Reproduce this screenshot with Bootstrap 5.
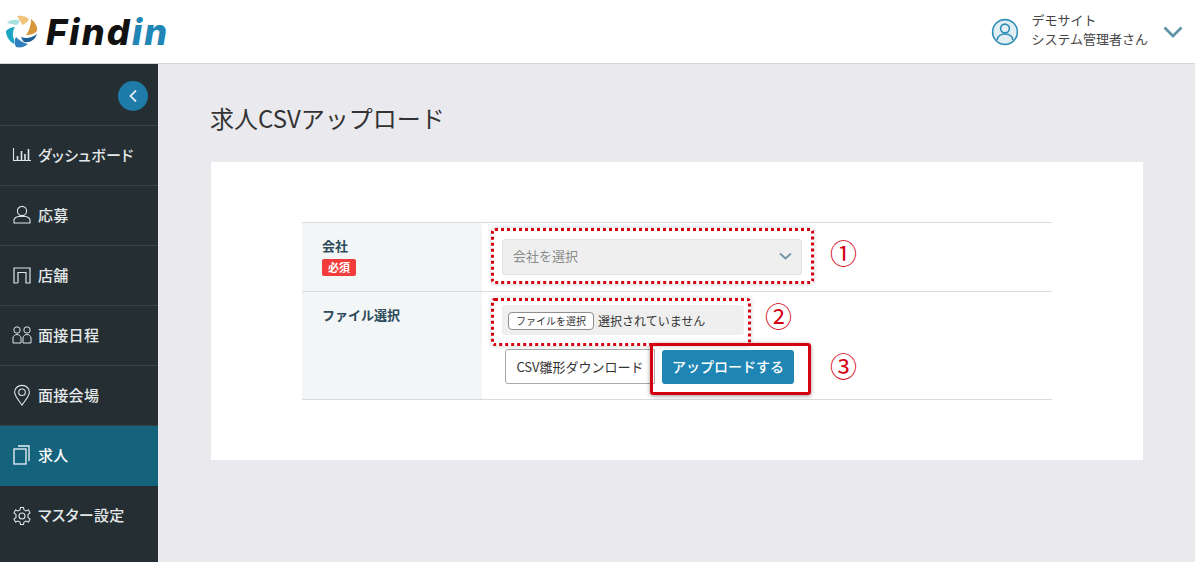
<!DOCTYPE html>
<html lang="ja">
<head>
    <meta charset="UTF-8">
    <meta name="viewport" content="width=device-width, initial-scale=1.0">
    <title>求人CSVアップロード</title>
    <link href="https://cdn.jsdelivr.net/npm/bootstrap@5.3.0/dist/css/bootstrap.min.css" rel="stylesheet">
    <style>
        html, body { height: 100%; overflow: hidden; }
        body {
            font-family: "Noto Sans CJK JP", "Noto Sans", sans-serif;
            background-color: #e9e9ee;
            color: #333;
        }
        .top-bar {
            height: 64px;
            background-color: #fff;
            border-bottom: 1px solid #d5d5d9;
            padding: 0 12px 0 6px;
        }
        .logo-text {
            font-family: Inter, "Liberation Sans", sans-serif;
            font-size: 36px;
            font-weight: 800;
            font-style: italic;
            letter-spacing: 2.2px;
            color: #111;
            line-height: 1;
            margin-left: 8px;
        }
        .logo-text span { color: #1f86b5; }
        .user-name { font-size: 13px; line-height: 19px; color: #444; margin: 0 15px 6px 12px; }
        .side-menu { width: 158px; background-color: #242e33; height: 498px; flex-shrink: 0; }
        .side-top { height: 62px; border-bottom: 1px solid #36434a; padding: 17px 10px 0 0; }
        .back-btn {
            width: 30px;
            height: 30px;
            border-radius: 50%;
            background-color: #1f7ba8;
        }
        .side-link {
            height: 60px;
            padding: 0 0 1px 12px;
            gap: 6px;
            color: #e4e8e9;
            font-size: 15px;
            font-weight: 500;
            font-feature-settings: "palt";
            letter-spacing: .3px;
            text-decoration: none;
            border-bottom: 1px solid #36434a;
        }
        .side-link.is-active { background-color: #15627d; color: #fff; border-bottom-color: #15627d; }
        .side-link.is-last { border-bottom: 0; }
        .side-icon { width: 20px; height: 22px; flex-shrink: 0; }
        .page-body { padding: 39px 52px 0 53px; }
        .page-title { font-size: 24px; font-weight: 400; line-height: 30px; color: #333; margin-bottom: 29px; margin-left: -1px; }
        .upload-card { height: 298px; background-color: #fff; padding: 60px 91px 0; border: 0; border-radius: 0; }
        .form-tbl { width: 750px; position: relative; border-top: 1px solid #d8dcdd; }
        .form-line { border-bottom: 1px solid #d8dcdd; }
        .line-one { height: 69px; }
        .line-two { height: 108px; }
        .form-head {
            width: 180px;
            background-color: #f3f6f6;
            padding: 13px 20px;
            font-size: 13px;
            font-weight: 700;
            color: #2c4a5a;
            line-height: 20px;
        }
        .must-tag {
            display: block;
            width: 34px;
            height: 17px;
            margin-top: 3px;
            line-height: 17px;
            background-color: #f23c3c;
            color: #fff;
            font-size: 11px;
            font-weight: 700;
            text-align: center;
            border-radius: 2px;
        }
        .form-cell { padding: 15px 0 0 20px; flex: 1; }
        .company-select {
            width: 300px;
            height: 36px;
            background-color: #efefef;
            border: 1px solid #e2e2e2;
            border-radius: 3px;
            padding: 0 9px 2px 10px;
            color: #8b8b8b;
            font-size: 13px;
        }
        .file-box {
            width: 242px;
            height: 30px;
            margin-top: -2px;
            background-color: #efefef;
            border-radius: 3px;
            padding: 1px 0 0 6px;
            font-size: 12px;
            color: #333;
            gap: 4px;
        }
        .file-btn {
            background-color: #fff;
            border: 1px solid #8f8f8f;
            border-radius: 4px;
            font-size: 10px;
            padding: 0 7px;
            height: 18px;
            line-height: 15px;
            color: #333;
        }
        .btn-row { margin-top: 14px; margin-left: 3px; gap: 0; }
        .btn-csv {
            height: 35px;
            width: 150px;
            padding: 0;
            border: 1px solid #a9a9a9;
            border-radius: 3px 0 0 3px;
            background-color: #fff;
            color: #333;
            font-size: 13px;
        }
        .btn-upload {
            height: 34px;
            width: 132px;
            margin-left: 7px;
            padding: 0;
            border: 0;
            border-radius: 3px;
            background-color: #1f85b5;
            color: #fff;
            font-size: 14px;
            font-weight: 500;
        }
        .dot-frame {
            position: absolute;
            border: 3px dotted #d40012;
            border-radius: 4px;
            box-shadow: 0 0 4px rgba(0, 0, 0, .2);
            pointer-events: none;
        }
        .frame-one { left: 189px; top: 5px; width: 323px; height: 56px; }
        .frame-two { left: 189px; top: 75px; width: 260px; height: 48px; }
        .solid-frame {
            position: absolute;
            left: 348px;
            top: 120px;
            width: 161px;
            height: 52px;
            border: 3px solid #d40012;
            border-radius: 3px;
            box-shadow: 0 1px 4px rgba(0, 0, 0, .4);
            pointer-events: none;
        }
        .step-num {
            position: absolute;
            color: #d40012;
            font-size: 27px;
            line-height: 30px;
            font-family: "Noto Sans CJK JP", sans-serif;
        }
        .step-one { left: 528px; top: 15px; }
        .step-two { left: 463px; top: 78px; }
        .step-three { left: 528px; top: 128px; }
    </style>
</head>
<body>

<!-- Header -->
<header class="top-bar d-flex align-items-center justify-content-between">
    <div class="d-flex align-items-center">
        <svg width="32" height="33" viewBox="0 0 32 33">
            <path d="M1 8 C3 5 7 4 13 5 C14 7 12 10 10 10 C7 9 4 9 1 8Z" fill="#a9e0e0"/>
            <path d="M11 1 C15 0 20 1 23 4 C22 7 19 9 16 10 C15 7 13 4 11 1Z" fill="#f0c27a"/>
            <path d="M25 4 C29 7 32 12 31 16 C28 19 24 20 20 20 C22 17 24 14 24 11 C25 9 25 6 25 4Z" fill="#d8963a"/>
            <path d="M31 19 C29 25 24 28 18 27 C17 26 16 24 15 22 C20 24 26 23 31 19Z" fill="#1c5f96"/>
            <path d="M10 22 C13 25 17 28 22 29 C19 32 14 33 10 32 C8 29 8 25 10 22Z" fill="#2f7fbf"/>
            <path d="M9 12 C7 15 6 20 8 24 L8 29 C3 26 0 21 0 16 C3 13 6 12 9 12Z" fill="#1ba3c4"/>
        </svg>
        <div class="logo-text">Find<span>in</span></div>
    </div>
    <div class="d-flex align-items-center">
        <svg width="28" height="28" viewBox="0 0 28 28" fill="#e3eef3" stroke="#2d8fb8" stroke-width="1.6">
            <circle cx="14" cy="14" r="12.4"/>
            <circle cx="14" cy="10.5" r="4.4"/>
            <path d="M6 22 C7 17 10 16 14 16 C18 16 21 17 22 22"/>
        </svg>
        <div class="user-name">デモサイト<br>システム管理者さん</div>
        <svg width="20" height="12" viewBox="0 0 20 12" fill="none" stroke="#5f93a6" stroke-width="2.8">
            <path d="M1.5 1.5 L10 10 L18.5 1.5"/>
        </svg>
    </div>
</header>

<div class="d-flex">
    <!-- Sidebar -->
    <nav class="side-menu">
        <div class="side-top d-flex justify-content-end">
            <div class="back-btn d-flex align-items-center justify-content-center">
                <svg width="10" height="14" viewBox="0 0 10 14" fill="none" stroke="#dbeaf1" stroke-width="1.8">
                    <path d="M8 1.5 L2.5 7 L8 12.5"/>
                </svg>
            </div>
        </div>
        <a class="side-link d-flex align-items-center" href="#">
            <svg class="side-icon" viewBox="0 0 20 22" fill="none" stroke="#dfe5e6" stroke-width="1.1">
                <path d="M1.5 4 V16.5 H19"/><path d="M5.5 16 V12 M9.5 16 V7 M13 16 V10 M16.5 16 V5" stroke-width="1.6"/>
            </svg>
            ダッシュボード
        </a>
        <a class="side-link d-flex align-items-center" href="#">
            <svg class="side-icon" viewBox="0 0 20 22" fill="none" stroke="#dfe5e6" stroke-width="1.1">
                <circle cx="10" cy="7" r="4.6"/><path d="M2 19 V16 C2 14 5 12.5 7 12.5 H13 C15 12.5 18 14 18 16 V19 Z"/>
            </svg>
            応募
        </a>
        <a class="side-link d-flex align-items-center" href="#">
            <svg class="side-icon" viewBox="0 0 20 22" fill="none" stroke="#dfe5e6" stroke-width="1.2">
                <path d="M5.5 19 H2 V4 H18 V19 H14 V8.5 H6 V19"/>
            </svg>
            店舗
        </a>
        <a class="side-link d-flex align-items-center" href="#">
            <svg class="side-icon" viewBox="0 0 20 22" fill="none" stroke="#dfe5e6" stroke-width="1">
                <circle cx="5" cy="6" r="3.2"/><path d="M1 19 V14 C1 12 3 10.5 5 10.5 C7 10.5 9 12 9 14 V19 Z"/>
                <circle cx="15" cy="6" r="3.2"/><path d="M11 19 V14 C11 12 13 10.5 15 10.5 C17 10.5 19 12 19 14 V19 Z"/>
            </svg>
            面接日程
        </a>
        <a class="side-link d-flex align-items-center" href="#">
            <svg class="side-icon" viewBox="0 0 20 24" fill="none" stroke="#dfe5e6" stroke-width="1.2">
                <path d="M10 23 C5 16 2 13 2 9 C2 4.5 5.5 1.5 10 1.5 C14.5 1.5 18 4.5 18 9 C18 13 15 16 10 23Z"/>
                <circle cx="10" cy="9" r="3.6"/>
            </svg>
            面接会場
        </a>
        <a class="side-link is-active d-flex align-items-center" href="#">
            <svg class="side-icon" viewBox="0 0 20 22" fill="none" stroke="#e8f4f8" stroke-width="1.3">
                <rect x="2" y="5" width="12" height="15"/><path d="M6 2 H17 V17"/>
            </svg>
            求人
        </a>
        <a class="side-link is-last d-flex align-items-center" href="#">
            <svg class="side-icon" viewBox="0 0 20 20" fill="none" stroke="#dfe5e6" stroke-width="1.1">
                <circle cx="10" cy="10" r="3"/>
                <path d="M8.5 1.5 H11.5 L12 4 L14 5 L16.5 4 L18 6.8 L16 8.5 V11.5 L18 13.2 L16.5 16 L14 15 L12 16 L11.5 18.5 H8.5 L8 16 L6 15 L3.5 16 L2 13.2 L4 11.5 V8.5 L2 6.8 L3.5 4 L6 5 L8 4 Z"/>
            </svg>
            マスター設定
        </a>
    </nav>

    <!-- Main Content -->
    <main class="page-body flex-grow-1">
        <h1 class="page-title">求人CSVアップロード</h1>
        <div class="card upload-card">
            <div class="form-tbl">
                <div class="form-line line-one d-flex">
                    <div class="form-head">会社<span class="must-tag">必須</span></div>
                    <div class="form-cell pt-3">
                        <div class="company-select d-flex align-items-center justify-content-between">
                            会社を選択
                            <svg width="13" height="8" viewBox="0 0 13 8" fill="none" stroke="#6f93a5" stroke-width="1.8">
                                <path d="M1 1.5 L6.5 6.5 L12 1.5"/>
                            </svg>
                        </div>
                    </div>
                </div>
                <div class="form-line line-two d-flex">
                    <div class="form-head">ファイル選択</div>
                    <div class="form-cell">
                        <div class="file-box d-flex align-items-center">
                            <span class="file-btn">ファイルを選択</span>選択されていません
                        </div>
                        <div class="btn-row d-flex align-items-center">
                            <button class="btn btn-csv" type="button">CSV雛形ダウンロード</button>
                            <button class="btn btn-upload" type="button">アップロードする</button>
                        </div>
                    </div>
                </div>

                <!-- Annotations -->
                <div class="dot-frame frame-one"></div>
                <div class="dot-frame frame-two"></div>
                <div class="solid-frame"></div>
                <div class="step-num step-one">①</div>
                <div class="step-num step-two">②</div>
                <div class="step-num step-three">③</div>
            </div>
        </div>
    </main>
</div>

<script src="https://cdn.jsdelivr.net/npm/bootstrap@5.3.0/dist/js/bootstrap.bundle.min.js"></script>
</body>
</html>
